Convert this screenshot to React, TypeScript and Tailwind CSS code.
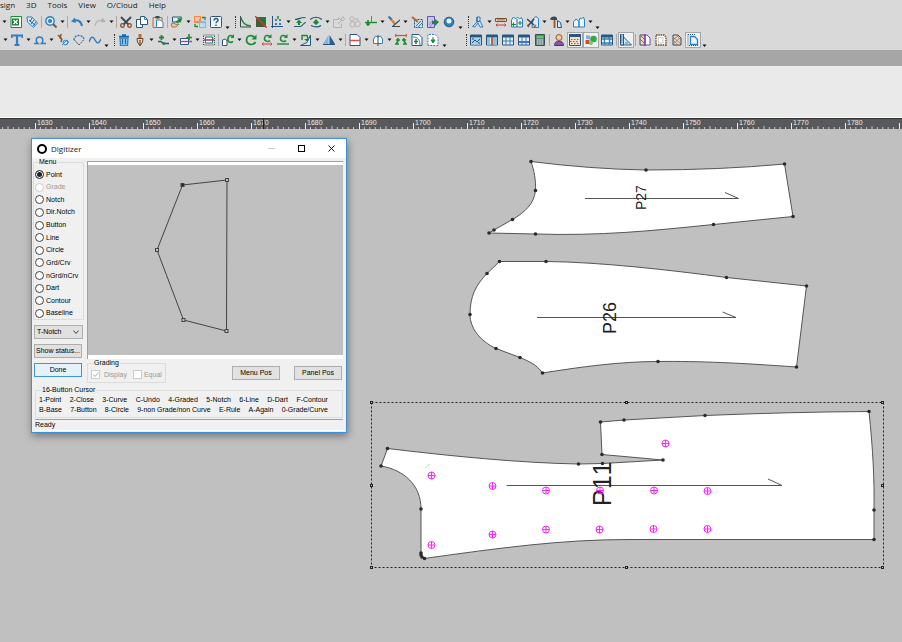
import type { ReactNode } from 'react'

const NAVY = '#2a567e'
const BLUE = '#2f7fc1'
const SKY = '#d6ecfa'
const GREEN = '#1e8a35'
const INK = '#3c4a58'
const GRAY = '#b3b3b3'

const sheet = 'M2 1h5l3 3v7H2z'
const frame = (
  <>
    <path d="M0.5 1h11v10h-11z" fill="#e4f1fb" stroke={NAVY} />
    <path d="M0 1h12v2.5H0z" fill={NAVY} />
  </>
)

const icons: Record<string, ReactNode> = {
  excel: (
    <>
      <path d="M1 0.5h10.5v11H1z" fill="#fff" stroke={GREEN} />
      <path d="M2 2.5h7v7H2z" fill="#1b7a3a" />
      <path d="M3.500 4l4 4M7.500 4l-4 4" stroke="#fff" strokeWidth="1.4" />
    </>
  ),
  tag: (
    <>
      <path d="M1 1h5l5.5 6-4 4.5L1.5 6z" fill={SKY} stroke={BLUE} />
      <path d="M3 4l6 5M6 2L4 6M8 4L5 8M10 6L7 10" stroke={NAVY} strokeWidth="0.9" />
    </>
  ),
  zoom: (
    <>
      <circle cx="5" cy="5" r="4.200" fill={SKY} stroke={BLUE} strokeWidth="1.4" />
      <circle cx="5" cy="5" r="2" fill={BLUE} />
      <path d="M8 8l3.5 3.5" stroke="#7b5a45" strokeWidth="2" />
    </>
  ),
  undo: (
    <>
      <path d="M2 5.5c4-2.5 8-1 9 4.5" fill="none" stroke={BLUE} strokeWidth="2" />
      <path d="M0 5.5L4 1.5l1 5.5z" fill={BLUE} />
    </>
  ),
  redo: (
    <>
      <path d="M10 5.5c-4-2.5-8-1-9 4.5" fill="none" stroke={GRAY} strokeWidth="1.2" />
      <path d="M12 5.5L8 1.5 7 7z" fill={GRAY} />
    </>
  ),
  cut: (
    <>
      <path d="M1 1l7.5 7.5M11 1L3.5 8.5" stroke={INK} strokeWidth="1.9" />
      <circle cx="2.5" cy="9.5" r="1.8" fill="none" stroke="#8a4a25" strokeWidth="1.3" />
      <circle cx="9.5" cy="9.5" r="1.8" fill="none" stroke="#8a4a25" strokeWidth="1.3" />
    </>
  ),
  copy: (
    <>
      <path d="M0.5 3.5h6v8h-6z" fill="#fff" stroke={NAVY} />
      <path d="M4.5 0.5h4l3 3v5h-7z" fill="#fff" stroke={NAVY} />
      <path d="M8.5 0.5v3h3" fill="none" stroke={BLUE} />
    </>
  ),
  paste: (
    <>
      <path d="M1 1.5h9v10H1z" fill="#ecdcc4" stroke="#96795a" />
      <path d="M3.5 0h4v2.5h-4z" fill={INK} />
      <path d="M4.5 4h4L11 6.500v5H4.500z" fill="#fff" stroke={BLUE} />
    </>
  ),
  place: (
    <>
      <path d="M1.500 1h9l-2 5h-7z" fill={SKY} stroke={NAVY} />
      <path d="M5 4h3V2l4 3-4 3V6.500H5z" fill={GREEN} transform="rotate(-30 7 5)" />
      <path d="M0 8l3-1 2 1.500 3-.5L5 11H1z" fill="#eec49b" stroke="#875335" strokeWidth="0.7" />
    </>
  ),
  swap: (
    <>
      <path d="M0 0h7v7H0z" fill="#f28b4b" />
      <path d="M1 2h5M1 4h4" stroke="#fff" />
      <path d="M5 5h7v7H5z" fill="#79bde8" />
      <path d="M6 8h5M6 10h5" stroke="#fff" />
      <path d="M8 1.500h3V4M1 8v2.500h3" fill="none" stroke={GREEN} strokeWidth="1.300" />
    </>
  ),
  help: (
    <>
      <rect x="0.500" y="0.500" width="11" height="11" rx="1" fill="#eef6fc" stroke={NAVY} />
      <path d="M4 4.500c0-3 4.500-2.500 4 0C7.800 5.500 6 5.800 6 7.300M6 8.500V10" fill="none" stroke={NAVY} strokeWidth="1.400" />
    </>
  ),
  curve: (
    <>
      <path d="M1.500 0v11H12" fill="none" stroke={INK} />
      <path d="M2 1.500c1 5 4 8 10 8.500" fill="none" stroke={GREEN} strokeWidth="1.300" />
    </>
  ),
  contrast: (
    <>
      <path d="M1 1h10v10H1z" fill="#1f7a3a" />
      <path d="M1 1v10h10z" fill="#5d4038" opacity="0.500" />
      <path d="M0 0l12 12" stroke="#e0332e" strokeWidth="1.400" />
    </>
  ),
  align: (
    <>
      <path d="M1.500 0v12M0 10.500h12" stroke={NAVY} />
      <path d="M4 4h2M8 4h2M4 8h2M8 8h2" stroke={BLUE} strokeWidth="2" />
      <path d="M7 0v3" stroke={GREEN} strokeWidth="1.500" />
    </>
  ),
  bend: (
    <>
      <path d="M1 3.500c4 0 4-2 10.500-2M0 10.500h6c3 0 3-4 6-4" fill="none" stroke={NAVY} strokeWidth="1.200" />
      <path d="M5 3.500L8 7H6v2H4V7H2z" fill={GREEN} />
    </>
  ),
  smooth: (
    <>
      <path d="M0 3.500c4-3 8-3 12 0M1 9.500c4 2 7 2 10 0" fill="none" stroke={NAVY} strokeWidth="1.200" />
      <path d="M6 3l3 3.500L6 9 3 6.500z" fill={GREEN} />
    </>
  ),
  sheetOff: <path d="M0.500 3.500h5v-2l3 3-3 3v-1M0.500 3.500v8h8v-4M8 3l2-2.500L11.500 3 10 5z" fill="none" stroke={GRAY} />,
  ringsOff: (
    <g fill="none" stroke={GRAY}>
      <circle cx="3" cy="3" r="2.200" />
      <circle cx="3.500" cy="8.500" r="2.700" />
      <circle cx="8.500" cy="8" r="2.800" />
      <path d="M6 3h3v2" />
    </g>
  ),
  cross: (
    <>
      <path d="M6.500 0v6.500" stroke="#8d62a8" />
      <path d="M0 6.500h12" stroke={GREEN} strokeWidth="1.400" />
      <path d="M3 4v6M1 8h4" stroke={GREEN} strokeWidth="1.600" />
    </>
  ),
  pencil: (
    <>
      <path d="M2 2l5 6" stroke="#d97d35" strokeWidth="2.200" />
      <path d="M0.500 0.500l3 3" stroke={BLUE} strokeWidth="2.200" />
      <path d="M12 4L5 10M4 10.500h8" stroke={INK} strokeWidth="1.200" />
    </>
  ),
  pickArea: (
    <>
      <path d="M3.500 3.500h8v8h-8z" fill="#c9dcea" stroke={NAVY} strokeDasharray="2 1" />
      <path d="M5 10l5-5M7 11l4-4" stroke={BLUE} />
      <path d="M1 1l6 5" stroke="#b36b35" strokeWidth="2.200" />
    </>
  ),
  exportSheet: (
    <>
      <path d="M0.500 0.500h7v11h-7z" fill="#c8c5ef" stroke="#5c59b5" />
      <path d="M2 9l4-5M3 11l5-6" stroke="#8a87d8" />
      <path d="M5 5h3V3l4 3-4 4V8H5z" fill={GREEN} />
    </>
  ),
  ball: (
    <>
      <circle cx="6" cy="6" r="4.800" fill={BLUE} stroke={NAVY} />
      <circle cx="6" cy="5" r="2.500" fill="#e5f4ff" />
    </>
  ),
  bodice: (
    <>
      <path d="M0.500 10.500L5 6V1h3v4l3 6H8L6 7l-3 4z" fill="#cfe6f7" stroke={BLUE} />
      <path d="M5 1v5l3-1" fill="none" stroke={NAVY} />
    </>
  ),
  measure: (
    <>
      <path d="M0.500 2.500h11v3h-11z" fill="#f0d8b4" stroke="#70513a" />
      <path d="M3 2.500v2M5 2.500v2M7 2.500v2M9 2.500v2" stroke="#70513a" />
      <path d="M1 9h10M2.500 7.500L1 9l1.500 1.500M9.500 7.500L11 9l-1.500 1.500" stroke="#c63e36" fill="none" />
    </>
  ),
  pieces: (
    <>
      <path d="M0.500 4l2-3 2 2 2-2 2 2 2-1.500 1 2.500v7h-11z" fill="#eef8ff" stroke={BLUE} />
      <path d="M6 3v8" stroke={NAVY} />
      <path d="M0 8.500h5M2.500 6.500v4M9 5v4M7 7h4" stroke={GREEN} strokeWidth="1.200" />
    </>
  ),
  cutPiece: (
    <>
      <path d="M6 3l3-2.500 2.500 2v9H5z" fill={SKY} stroke={BLUE} />
      <path d="M0 3l7 6M7 3L1 10" stroke={INK} strokeWidth="1.600" />
      <path d="M0 9l2 2M7 11l2-2" stroke="#8a5a35" strokeWidth="1.500" />
    </>
  ),
  hammer: (
    <>
      <path d="M0 3c2-3 5-3 7-1v2H4L1 4z" fill={INK} />
      <path d="M4.500 4v8" stroke="#96552e" strokeWidth="1.800" />
      <path d="M7.500 4.500l3 2 1 5h-4z" fill={SKY} stroke={NAVY} />
    </>
  ),
  panels: <path d="M0.500 11V6L3 3l3 2.500V11zM6 11V5l1-3 1.500 1 2-2 1 3v7z" fill="#edf7ff" stroke={BLUE} />,
  text: <path d="M0.500 4V1.500h11V4M6 2v9M3.500 11h5" fill="none" stroke={BLUE} strokeWidth="2.200" />,
  omega: <path d="M0 9.500h4C1 7 2 3 5.500 3S10 7 7.500 9.500H12" fill="none" stroke={BLUE} strokeWidth="1.500" />,
  nodes: (
    <>
      <path d="M1 1l4 4M4 0L3 5M5 5l-1 3" stroke="#8c5a33" strokeWidth="1.600" />
      <circle cx="8.500" cy="8.500" r="2.300" fill={SKY} stroke={BLUE} />
      <path d="M5 11l5-5 1.500 2L9 11" fill="none" stroke={BLUE} />
    </>
  ),
  arc: (
    <>
      <path d="M1 6C1 0 11 0 11 6" fill="none" stroke={BLUE} strokeDasharray="2 1" strokeWidth="1.400" />
      <path d="M1.500 6L6 11l4.500-5" fill="none" stroke={INK} strokeDasharray="2 1" />
    </>
  ),
  wave: <path d="M0 8C2 2 4 2 6 6s4 4 6-1" fill="none" stroke={BLUE} strokeWidth="1.500" />,
  trash: (
    <>
      <path d="M2 4h8l-.5 7.500h-7z" fill="#9bd0f3" stroke={BLUE} strokeWidth="1.300" />
      <path d="M1 2.500h10M4 1h4M4.500 5v5M7.500 5v5" stroke="#1769ad" strokeWidth="1.300" />
    </>
  ),
  pen: (
    <>
      <path d="M4.500 0h3v4h-3z" fill="#b66c37" />
      <path d="M3 4.500h6L8.500 8 6 12 3.500 8z" fill="#f5d8b8" stroke="#6d432b" />
      <path d="M6 6v5" stroke="#442c20" />
    </>
  ),
  addPoint: (
    <>
      <path d="M1 7.500h3l2 2h6" fill="none" stroke={NAVY} strokeWidth="1.300" />
      <path d="M4.500 1v5M2 3.500h5" stroke={GREEN} strokeWidth="1.800" />
      <circle cx="7" cy="9.500" r="1.500" fill={GREEN} />
    </>
  ),
  addBox: (
    <>
      <path d="M0.500 4.500h8v6h-8z" fill="#fff" stroke={NAVY} />
      <path d="M0 7.500h12" stroke="#a33bb3" strokeWidth="1.400" />
      <path d="M9 0v6M6.500 3.500H12" stroke={GREEN} strokeWidth="1.600" />
    </>
  ),
  boxRow: (
    <>
      <path d="M0.500 1h11v10h-11z" fill="none" stroke={INK} strokeDasharray="1 1" />
      <path d="M2.500 3h7v6h-7z" fill="#fff" stroke={GREEN} />
      <path d="M1 6h10" stroke="#a33bb3" strokeWidth="1.600" />
    </>
  ),
  rotPiece: (
    <>
      <path d="M0.500 6l3-1 1.500 2v4.500H0.500z" fill="#fff" stroke={NAVY} />
      <path d="M11 7.500c-3 2-6 0-5-3.500s4-3 5-1" fill="none" stroke={GREEN} strokeWidth="1.600" />
      <path d="M12 0v4H8.500z" fill={GREEN} />
    </>
  ),
  rotate: (
    <>
      <path d="M10.500 8C8.500 12 1.500 11 1.500 6S7 0.500 9.500 3.500" fill="none" stroke={GREEN} strokeWidth="1.700" />
      <path d="M11.500 0.500v5H6.500z" fill={GREEN} />
    </>
  ),
  rotLine: (
    <>
      <path d="M9 6.500C7 8.500 3 7 3.500 4S7 1 9 2.500" fill="none" stroke={GREEN} strokeWidth="1.500" />
      <path d="M10.500 0v4H7z" fill={GREEN} />
      <path d="M1 10h10M2.500 8.500L1 10l1.500 1.500M9.500 8.500L11 10l-1.500 1.500" fill="none" stroke="#d5413e" />
    </>
  ),
  rotBase: (
    <>
      <path d="M9 6.500C7 8.500 3 7 3.500 4S7 1 9 2.500" fill="none" stroke={GREEN} strokeWidth="1.500" />
      <path d="M10.500 0v4H7z" fill={GREEN} />
      <path d="M0 10h12" stroke={GREEN} strokeWidth="1.400" />
    </>
  ),
  rotPage: (
    <>
      <path d="M0.500 11.500h10V1L7 8.500z" fill={SKY} stroke={NAVY} />
      <path d="M2 6V1.500h5l1 3-2 2" fill="none" stroke={GREEN} strokeWidth="1.400" />
      <path d="M4 5h4v3z" fill={GREEN} />
    </>
  ),
  mirror: (
    <>
      <path d="M5.500 1v9H0z" fill="#81b6dc" />
      <path d="M6.500 1v9H12z" fill="#245f99" />
      <path d="M0 10.500h12" stroke={NAVY} />
    </>
  ),
  splitPage: (
    <>
      <path d="M1 0.500h7l3 3v8H1z" fill="#fff" stroke={NAVY} />
      <path d="M1 6.500h10" stroke="#d94c45" strokeWidth="1.500" />
    </>
  ),
  openPiece: (
    <>
      <path d="M1.500 9.500V5l2-3L6 3l2.500-1 2 3v4.500z" fill="#fff" stroke={BLUE} />
      <path d="M6 1v11" stroke={INK} />
    </>
  ),
  measureArrows: (
    <>
      <path d="M0 1.500h12" stroke="#d94c45" strokeWidth="1.200" />
      <path d="M0 0l3 1.500L0 3zM12 0L9 1.500 12 3z" fill="#d94c45" />
      <path d="M1 6h4M3 4v3l-2 3h3M11 6H7M9 4v3l2 3H8" fill="none" stroke={GREEN} strokeWidth="1.600" />
    </>
  ),
  pageTurn: (
    <>
      <path d="M1 0.500h7l3 3v8H1z" fill="#fff" stroke={NAVY} />
      <path d="M2 3c5 0 7 3 7 8" fill="none" stroke={BLUE} />
      <path d="M5 5v5M3 7.500h4" stroke={GREEN} strokeWidth="1.500" />
    </>
  ),
  pageDown: (
    <>
      <path d="M1 11.500v-11h7l3 3v8z" fill="#fff" stroke={BLUE} strokeDasharray="2 1" />
      <path d="M6 3v4M4 6l2 3 2-3z" fill={GREEN} stroke={GREEN} />
    </>
  ),
  winChart: (
    <>
      {frame}
      <path d="M1 4h10v6.500H1z" fill="#a4cfed" />
      <path d="M2 9l3-3 2 2 3-3M2 5h2M8 9h2" fill="none" stroke={NAVY} />
    </>
  ),
  winColumn: (
    <>
      {frame}
      <path d="M1 3.500h3V11H1zM8 3.500h3V11H8z" fill="#8fbfe2" />
      <path d="M5 3h2.500v8H5z" fill="#b16a3b" />
    </>
  ),
  winGrid: (
    <>
      {frame}
      <path d="M4 3v8M8 3v8M1 7h10" stroke={BLUE} />
    </>
  ),
  winTable: (
    <>
      {frame}
      <path d="M1 7h10v2H1z" fill="#5869bd" />
      <path d="M4 3v8M8 3v8" stroke={BLUE} />
    </>
  ),
  calc: (
    <>
      <path d="M1.500 0.500h9v11h-9z" fill="#65877a" stroke={INK} />
      <path d="M3 2h6v2H3z" fill="#53d45d" />
      <path d="M3 6h6M3 8h6M3 10h6" stroke="#e7f2f8" strokeDasharray="1.500 0.700" />
    </>
  ),
  person: (
    <>
      <path d="M1.500 11.500c0-6 9-6 9 0z" fill="#8a54ad" stroke="#513174" />
      <circle cx="6" cy="3.500" r="3" fill="#f2cd9c" stroke="#895b31" />
    </>
  ),
  pattern: (
    <>
      <path d="M0.500 0.500h11v11h-11z" fill="#f4dfca" stroke={NAVY} />
      <path d="M0 0h12v3H0z" fill={NAVY} />
      <path d="M2 5.500h9M1 7.500h9M2 9.500h9" stroke="#84624d" strokeDasharray="1.500 1.500" />
    </>
  ),
  shapes: (
    <>
      <path d="M1 1l4 .5v4L1 5z" fill="#7fb4e6" />
      <circle cx="8.500" cy="5" r="3.300" fill="#35a943" />
      <path d="M0.500 6h4v4h-4z" fill="#e14235" />
      <circle cx="6" cy="9" r="2" fill="#5fd06a" />
    </>
  ),
  winFocus: (
    <>
      {frame}
      <path d="M3.500 5h5v4h-5zM1 5h2M9 5h2M1 9h2M9 9h2M4 3v2M8 3v2M4 9v2M8 9v2" fill="#fff" stroke={BLUE} strokeWidth="1.300" />
    </>
  ),
  ruler: (
    <>
      <path d="M1 0.500V11h10.500z" fill={SKY} stroke={NAVY} />
      <path d="M0.500 0h3v11h-3z" fill="#b9dcf4" stroke={NAVY} />
      <path d="M1 2h1.500M1 4h1.500M1 6h1.500M1 8h1.500M5 9h3" stroke={NAVY} strokeWidth="0.800" />
    </>
  ),
  fabricSplit: (
    <>
      <path d="M1 1h5v10H1z" fill="#ecd8c2" stroke={INK} />
      <path d="M2 2l4 4M1 5l5 5" stroke="#8c6f5b" />
      <path d="M6 1h2l3 3v7H6z" fill="#fff" stroke="#6454a8" />
      <path d="M6 0v12" stroke="#9a36bd" strokeWidth="1.400" />
    </>
  ),
  fabricFrame: (
    <>
      <path d="M1 1h8l2 2v8H1z" fill="#fff" stroke="#8b6e58" strokeWidth="1.800" strokeDasharray="1.500 0.800" />
      <path d="M3.500 3.500H8v5.500H3.500z" fill="#fff" stroke={GRAY} strokeWidth="0.700" />
    </>
  ),
  fabric: (
    <>
      <path d={sheet} fill="#ead8c7" stroke={INK} />
      <path d="M2 3l8 7M2 6l5 5M5 1l5 5M9 4l-7 6M7 2L2 6" stroke="#8d6c59" strokeWidth="0.700" />
    </>
  ),
  pageSelect: (
    <>
      <path d="M3.500 2.500h4l3 3v5h-7z" fill="#eaf6ff" stroke={BLUE} strokeWidth="1.300" />
      <path d="M1 0.500v11h11M1 0.500h7" fill="none" stroke={NAVY} strokeDasharray="1 1" />
    </>
  ),
}

// '>' caret, '.' overflow caret, '|' separator, ':' grip, '_' gap, '*' prefix marks a pressed tool
const topTools = '> excel tag | zoom > | undo > redo > | cut copy paste | place > swap help . : curve contrast align > bend smooth > sheetOff ringsOff cross > pencil > pickArea exportSheet ball . : bodice > measure pieces cutPiece > hammer > panels > .'.split(' ')
const bottomTools = '> text > omega > nodes arc wave . : trash pen > addPoint > addBox > boxRow | rotPiece > rotate rotLine rotBase > rotPage > mirror > | splitPage > openPiece > measureArrows pageTurn pageDown . _ : winChart winColumn winGrid winTable calc | person *pattern *shapes winFocus | *ruler | fabricSplit fabricFrame fabric *pageSelect .'.split(' ')

function Tool({ name }: { name: string }) {
  if (name === '|') return <span className="mx-px h-3 w-px shrink-0 bg-[#aaa]" />
  if (name === ':') return <span className="mr-px ml-1 h-3 w-px shrink-0 border-l border-dotted border-[#333]" />
  if (name === '_') return <span className="w-3.5 shrink-0" />
  if (name === '>' || name === '.') {
    return (
      <button aria-label="More options" className={`flex h-4 w-[7px] shrink-0 justify-center ${name === '.' ? 'items-end' : 'items-center'}`}>
        <svg className="h-1 w-[5px]" viewBox="0 0 5 4" aria-hidden="true">
          <path d="M0.500 0.500h4L2.500 3z" fill="#111" />
        </svg>
      </button>
    )
  }
  const pressed = name.startsWith('*')
  const id = pressed ? name.slice(1) : name
  return (
    <button aria-label={id} className={`grid size-4 shrink-0 place-items-center ${pressed ? 'border border-[#a6a6a6] bg-[#f0f0f0]' : ''}`}>
      <svg className="size-3" viewBox="0 0 12 12" aria-hidden="true">{icons[id]}</svg>
    </button>
  )
}

const rulerMarks = Array.from({ length: 16 }, (_, i) => 1630 + i * 10)
const ticks = [1, 2, 3, 4, 5, 6, 7, 8, 9]

function Ruler() {
  return (
    <div className="relative flex h-[11px] overflow-hidden border-t border-[#333] bg-[#58595c] text-[7px] leading-[8px] text-[#ececec]">
      <svg className="h-2.5 w-[35px] shrink-0" viewBox="19 0 35 10" aria-hidden="true">
        {ticks.slice(3).map((n) => (
          <path key={n} d={`M${n * 5.4} ${n === 5 ? 7 : 8}v3`} stroke="#c9c9c9" />
        ))}
      </svg>
      {rulerMarks.map((mark) => (
        <div key={mark} className="relative w-[54px] shrink-0 pl-0.5">
          {mark}
          <svg className="absolute inset-0 h-2.5 w-[54px]" viewBox="0 0 54 10" aria-hidden="true">
            <path d="M0.500 4v6" stroke="#ededed" />
            {ticks.map((n) => (
              <path key={n} d={`M${n * 5.4} ${n === 5 ? 7 : 8}v3`} stroke="#c9c9c9" />
            ))}
          </svg>
        </div>
      ))}
      <span className="mt-1 h-1.5 w-px shrink-0 bg-[#ededed]" />
      <span className="absolute inset-y-0 left-[263px] w-px bg-[#222]" />
    </div>
  )
}

const pieces = [
  {
    name: 'P27',
    path: 'M531 161.500Q590 169 646 170Q720 170 784.500 164L793 216.500L713.500 224.500C650 231 600 236 535.500 234L489 233L494 230L512.500 219.500C525 212 534 204 535.500 190.500C536 180 534 170 531 161.500Z',
    points: [[531, 161.5], [646, 170], [784.5, 164], [793, 216.5], [713.5, 224.5], [535.5, 234], [489, 233], [494, 230], [512.5, 219.5], [535.5, 190.5]],
    grain: 'M585 198.500H738.500L725 192.500',
    label: { x: 646, y: 210, size: 14 },
  },
  {
    name: 'P26',
    path: 'M499.500 261.500H546C600 262 670 270 726.500 277.500L806.500 286L796.500 367C740 363 700 361 658 361.500C620 361.500 580 367 542.500 373C536 364 530 362 520 357.500L496 348.500C480 341 470 328 470 314.500C470 296 476 285 487 273.500Z',
    points: [[499.5, 261.5], [546, 261.5], [726.5, 277.5], [806.5, 286], [796.5, 367], [658, 361.5], [542.5, 373], [520, 357.5], [496, 348.5], [470, 314.5], [487, 273.5]],
    grain: 'M537 317.500H736L722.500 312',
    label: { x: 616, y: 334, size: 18 },
  },
  {
    name: 'P11',
    path: 'M387.500 448.500C450 456 520 463 578.500 464L602.500 463.500L663 460L602 454.500L600.500 422L624 420L705 415.500Q790 412 869 411.500C873 450 874.500 480 874 510V539.500H630C560 539.500 500 548 424 558.500L421 555V509C421 485 404 470 381 466Z',
    points: [[387.5, 448.5], [578.5, 464], [602.5, 463.5], [663, 460], [602, 454.5], [600.5, 422], [624, 420], [705, 415.5], [869, 411.5], [874, 510], [874, 539.5], [424.5, 558.5], [422, 557], [421, 555], [421, 553], [421, 509], [381, 466]],
    grain: 'M506.500 485.500H782L768 479',
    label: { x: 611, y: 506, size: 25 },
  },
]

const buttonMarks = [
  [665.5, 443.5], [431.5, 475.5], [492.5, 486], [546, 490.5], [600, 490.5], [654, 490.5], [707.5, 491],
  [431.5, 545], [492.5, 534.5], [546, 529.5], [599.5, 529.5], [653.5, 529], [707.5, 529],
]

const handles = [[372, 402], [627, 402], [883, 402], [372, 485], [883, 485], [372, 567], [627, 567], [883, 567]]

function Pieces() {
  return (
    <svg className="absolute inset-0 h-full w-full overflow-hidden" role="img" aria-label="Pattern pieces">
      <g transform="translate(0 -129)">
        {pieces.map((piece) => (
          <g key={piece.name}>
            <path d={piece.path} fill="#fff" stroke="#555" />
            <path d={piece.grain} fill="none" stroke="#555" />
            <text
              className="[font-kerning:none]"
              transform={`translate(${piece.label.x} ${piece.label.y}) rotate(-90)`}
              fontSize={piece.label.size}
              fill="#222"
            >
              {piece.name}
            </text>
            {piece.points.map(([x, y], i) => (
              <circle key={i} cx={x} cy={y} r="1.800" fill="#2a2a2a" />
            ))}
          </g>
        ))}
        <path d="M425 468l5-4" stroke="#a5dce8" />
        <g fill="none" stroke="#ff22ff">
          {buttonMarks.map(([x, y]) => (
            <path key={`${x}-${y}`} d={`M${x - 3.5} ${y}a3.500 3.500 0 1 0 7 0a3.500 3.500 0 1 0 -7 0h7M${x} ${y - 3.5}v7`} />
          ))}
        </g>
        <rect x="371.500" y="402.500" width="512" height="165" fill="none" stroke="#222" strokeDasharray="2 2" />
        {handles.map(([x, y]) => (
          <rect key={`${x}-${y}`} x={x - 1.5} y={y - 0.5} width="2" height="2" fill="#c0c0c0" stroke="#222" />
        ))}
      </g>
    </svg>
  )
}

const modes = ['Point', 'Grade', 'Notch', 'Dir.Notch', 'Button', 'Line', 'Circle', 'Grd/Crv', 'nGrd/nCrv', 'Dart', 'Contour', 'Baseline']
const cursorKeys = [
  ['1-Point', '2-Close', '3-Curve', 'C-Undo', '4-Graded', '5-Notch', '6-Line', 'D-Dart', 'F-Contour'],
  ['B-Base', '7-Button', '8-Circle', '9-non Grade/non Curve', 'E-Rule', 'A-Again', '0-Grade/Curve'],
]
const outline = [[182.5, 185], [227, 180], [226.5, 331], [183.5, 320], [157, 250]]

const buttonClass = 'h-3.5 w-12 border border-[#adadad] bg-[#e1e1e1] text-center whitespace-nowrap'

function Digitizer() {
  return (
    <section
      aria-label="Digitizer"
      className="absolute top-[9px] left-[31px] w-[316px] border border-[#3f8fd8] bg-[#f0f0f0] text-[7px] leading-[8px] text-black shadow-[1px_3px_8px_rgba(0,0,0,0.4)]"
    >
      <header className="flex h-[19px] items-center bg-white pl-[5px] font-['Open_Sans',sans-serif]">
        <span className="size-2.5 rounded-full border-2 border-black" />
        <h1 className="ml-1 flex-1 text-[8px] leading-[10px] text-[#222]">Digitizer</h1>
        <button aria-label="Minimize" className="grid h-4 w-[30px] place-items-center">
          <span className="w-[7px] border-t border-[#ccc]" />
        </button>
        <button aria-label="Maximize" className="grid h-4 w-[30px] place-items-center">
          <span className="size-[7px] border border-black" />
        </button>
        <button aria-label="Close" className="grid h-4 w-[30px] place-items-center">
          <svg className="size-[7px]" viewBox="0 0 7 7" aria-hidden="true">
            <path d="M0.500 0.500l6 6M6.500 0.500l-6 6" stroke="#111" />
          </svg>
        </button>
      </header>

      <div className="flex gap-[3px] pl-px">
        <div className="mb-1.5 flex w-[51px] flex-col gap-[5px]">
          <fieldset className="flex flex-1 flex-col justify-between border border-[#dcdcdc] pt-1 pb-px">
            <legend className="ml-1 px-px">Menu</legend>
            {modes.map((mode) => (
              <label key={mode} className={`flex items-center gap-0.5 pl-px whitespace-nowrap ${mode === 'Grade' ? 'text-[#999]' : ''}`}>
                <input
                  type="radio"
                  name="mode"
                  defaultChecked={mode === 'Point'}
                  disabled={mode === 'Grade'}
                  className="size-[9px] shrink-0 appearance-none rounded-full border border-[#444] bg-white checked:bg-[#222] checked:shadow-[inset_0_0_0_1px_white] disabled:border-[#ccc]"
                />
                {mode}
              </label>
            ))}
          </fieldset>
          <div className="relative mx-px">
            <select aria-label="Notch type" className="block h-3.5 w-full appearance-none border border-[#adadad] bg-[#e1e1e1] pl-0.5">
              <option>T-Notch</option>
            </select>
            <svg className="pointer-events-none absolute top-1 right-1 h-1.5 w-1.5" viewBox="0 0 6 6" aria-hidden="true">
              <path d="M0.500 1.500L3 4.500l2.500-3" fill="none" stroke="#444" />
            </svg>
          </div>
          <button className={`${buttonClass} mx-px`}>Show status...</button>
          <button className="mx-px h-3.5 w-12 border border-[#3c94dd] bg-[#e5f1fb]">Done</button>
        </div>

        <div className="flex flex-1 flex-col">
          <div className="mt-[3px] mr-[3px] border-t border-l border-[#a0a0a0] bg-white pt-[3px] pb-1">
            <svg className="block h-[190px] w-full bg-[#c0c0c0]" role="img" aria-label="Digitized outline">
              <g transform="translate(-88 -165)" fill="none" stroke="#444">
                <polygon points={outline.map((p) => p.join(',')).join(' ')} />
                {outline.map(([x, y], i) => (
                  <rect key={i} x={x - 1.5} y={y - 1.5} width="3" height="3" fill={i === 0 ? '#222' : '#c0c0c0'} />
                ))}
              </g>
            </svg>
          </div>
          <div className="flex items-end pr-1">
            <fieldset className="flex h-6 items-center gap-1.5 border border-[#dcdcdc] px-[3px] text-[#999]">
              <legend className="ml-0.5 px-px text-black">Grading</legend>
              {['Display', 'Equal'].map((name) => (
                <label key={name} className="flex items-center gap-0.5">
                  <input type="checkbox" disabled defaultChecked={name === 'Display'} className="peer size-[9px] appearance-none border border-[#ccc] bg-white" />
                  {name === 'Display' && (
                    <svg className="mr-0.5 -ml-[11px] size-[9px]" viewBox="0 0 9 9" aria-hidden="true">
                      <path d="M2 4.500L4 6.500 7.500 2.500" fill="none" stroke="#aaa" />
                    </svg>
                  )}
                  {name}
                </label>
              ))}
            </fieldset>
            <div className="mb-[3px] ml-auto flex gap-3.5">
              <button className={buttonClass}>Menu Pos</button>
              <button className={buttonClass}>Panel Pos</button>
            </div>
          </div>
        </div>
      </div>

      <fieldset className="mx-[3px] mt-[3px] border border-[#dcdcdc] pt-px pr-3.5 pb-0.5 pl-[3px]">
        <legend className="ml-0.5 px-px">16-Button Cursor</legend>
        {cursorKeys.map((row) => (
          <div key={row[0]} className="flex justify-between leading-[10px] whitespace-nowrap">
            {row.map((key) => (
              <span key={key}>{key}</span>
            ))}
          </div>
        ))}
      </fieldset>
      <footer className="mx-[3px] mt-px mb-px border-t border-b border-t-[#a0a0a0] border-b-white leading-[10px]">Ready</footer>
    </section>
  )
}

export default function App() {
  return (
    <div className="flex min-h-screen flex-col overflow-hidden bg-[#c0c0c0] font-['Liberation_Sans',Arial,sans-serif]">
      <div className="h-[50px] overflow-hidden bg-[#d9d9d9]">
        <nav className="flex h-[13px] gap-[11px] font-['Open_Sans',sans-serif] text-[8px] leading-[9px] text-[#222]">
          {['sign', '3D', 'Tools', 'View', 'O/Cloud', 'Help'].map((item) => (
            <a key={item} href="#">{item}</a>
          ))}
        </nav>
        <div className="flex h-[18px] items-center pl-px">
          {topTools.map((name, i) => <Tool key={i} name={name} />)}
        </div>
        <div className="flex h-[18px] items-center pl-0.5">
          {bottomTools.map((name, i) => <Tool key={i} name={name} />)}
        </div>
      </div>
      <div className="h-4 bg-[#a6a6a6]" />
      <div className="h-[52px] border-b border-white bg-[#eaeaea]" />
      <Ruler />
      <main className="relative flex-1 overflow-hidden">
        <Pieces />
        <Digitizer />
      </main>
    </div>
  )
}
